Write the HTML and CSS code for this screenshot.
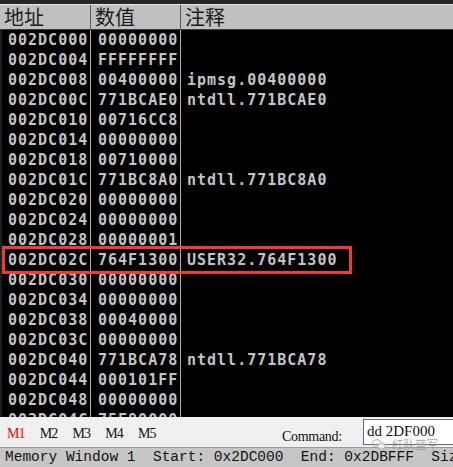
FILE: index.html
```html
<!DOCTYPE html>
<html lang="zh">
<head>
    <meta charset="UTF-8">
    <title>Memory Window</title>
    <link rel="stylesheet" href="styles.css">
</head>
<body>
    <div class="window">
        <div class="top-strip"></div>

        <div class="header">
            <div class="col addr">地址</div>
            <div class="col val">数值</div>
            <div class="col note">注释</div>
        </div>

        <div class="rows">
            <div class="row"><span class="addr">002DC000</span><span class="val">00000000</span><span class="note"></span></div>
            <div class="row"><span class="addr">002DC004</span><span class="val">FFFFFFFF</span><span class="note"></span></div>
            <div class="row"><span class="addr">002DC008</span><span class="val">00400000</span><span class="note">ipmsg.00400000</span></div>
            <div class="row"><span class="addr">002DC00C</span><span class="val">771BCAE0</span><span class="note">ntdll.771BCAE0</span></div>
            <div class="row"><span class="addr">002DC010</span><span class="val">00716CC8</span><span class="note"></span></div>
            <div class="row"><span class="addr">002DC014</span><span class="val">00000000</span><span class="note"></span></div>
            <div class="row"><span class="addr">002DC018</span><span class="val">00710000</span><span class="note"></span></div>
            <div class="row"><span class="addr">002DC01C</span><span class="val">771BC8A0</span><span class="note">ntdll.771BC8A0</span></div>
            <div class="row"><span class="addr">002DC020</span><span class="val">00000000</span><span class="note"></span></div>
            <div class="row"><span class="addr">002DC024</span><span class="val">00000000</span><span class="note"></span></div>
            <div class="row"><span class="addr">002DC028</span><span class="val">00000001</span><span class="note"></span></div>
            <div class="row"><span class="addr">002DC02C</span><span class="val">764F1300</span><span class="note">USER32.764F1300</span></div>
            <div class="row"><span class="addr">002DC030</span><span class="val">00000000</span><span class="note"></span></div>
            <div class="row"><span class="addr">002DC034</span><span class="val">00000000</span><span class="note"></span></div>
            <div class="row"><span class="addr">002DC038</span><span class="val">00040000</span><span class="note"></span></div>
            <div class="row"><span class="addr">002DC03C</span><span class="val">00000000</span><span class="note"></span></div>
            <div class="row"><span class="addr">002DC040</span><span class="val">771BCA78</span><span class="note">ntdll.771BCA78</span></div>
            <div class="row"><span class="addr">002DC044</span><span class="val">000101FF</span><span class="note"></span></div>
            <div class="row"><span class="addr">002DC048</span><span class="val">00000000</span><span class="note"></span></div>
            <div class="row"><span class="addr">002DC04C</span><span class="val">75F80000</span><span class="note"></span></div>
        </div>

        <div class="toolbar">
            <div class="tabs">
                <span class="tab active">M1</span>
                <span class="tab">M2</span>
                <span class="tab">M3</span>
                <span class="tab">M4</span>
                <span class="tab">M5</span>
            </div>
            <span class="cmd-label">Command:</span>
            <div class="cmd-input">dd 2DF000</div>
        </div>

        <div class="status">Memory Window 1  Start: 0x2DC000  End: 0x2DBFFF  Siz</div>

        <!-- 标注框 -->
        <div class="highlight"></div>

        <!-- 水印 -->
        <div class="watermark">
            <svg width="14" height="11" viewBox="0 0 14 11">
                <ellipse cx="5" cy="4.5" rx="4.5" ry="3.8" fill="none" stroke="#a8a8a8" stroke-width="1"/>
                <ellipse cx="9.5" cy="7" rx="3.8" ry="3.2" fill="#f4f4f4" stroke="#a8a8a8" stroke-width="1"/>
            </svg>
            <span>红队蓝军</span>
        </div>
    </div>
</body>
</html>
```

FILE: styles.css
```css
body {
    margin: 0;
    padding: 0;
    background-color: #000;
    overflow: hidden;
}

.window {
    position: relative;
    width: 453px;
    height: 467px;
    display: flex;
    flex-direction: column;
    overflow: hidden;
}

.top-strip {
    height: 4px;
    flex-shrink: 0;
    background-color: #262626;
}

.header {
    display: flex;
    flex-shrink: 0;
    height: 26px;
    box-sizing: border-box;
    background-color: #c0c0c0;
    border-top: 1px solid #e6e6e6;
    border-bottom: 1px solid #3a3a3a;
    font-family: "Noto Sans CJK SC", sans-serif;
    font-size: 20px;
    line-height: 24px;
    color: #1c1c1c;
}

.header .col {
    box-sizing: border-box;
    padding-left: 4px;
    white-space: nowrap;
}

.header .addr {
    width: 91px;
    border-right: 1px solid #5a5a5a;
}

.header .val {
    width: 90px;
    border-right: 1px solid #5a5a5a;
}

.header .note {
    flex: 1;
}

.rows {
    flex: 1;
    overflow: hidden;
    background-color: #000;
    border-left: 2px solid #1e1e1e;
}

.row {
    display: flex;
    height: 20px;
    font-family: "DejaVu Sans Mono", monospace;
    font-weight: bold;
    font-size: 15px;
    letter-spacing: 1px;
    line-height: 20px;
    color: #c4c4c4;
    white-space: nowrap;
}

.row span {
    box-sizing: border-box;
}

.row .addr {
    width: 89px;
    padding-left: 6px;
    border-right: 1px solid #b0b0b0;
}

.row .val {
    width: 90px;
    padding-left: 7px;
    border-right: 1px solid #b0b0b0;
}

.row .note {
    flex: 1;
    padding-left: 6px;
}

.toolbar {
    display: flex;
    flex-shrink: 0;
    height: 30px;
    background-color: #f0f0f0;
    font-family: "Liberation Serif", serif;
    white-space: nowrap;
    overflow: hidden;
}

.tabs {
    display: flex;
    flex-shrink: 0;
    width: 282px;
    box-sizing: border-box;
    padding: 9px 0 0 7px;
    font-size: 14px;
    line-height: 16px;
    color: #111;
}

.tab {
    width: 32.75px;
    flex-shrink: 0;
    letter-spacing: -1px;
}

.tab.active {
    color: #ff0000;
}

.cmd-label {
    flex-shrink: 0;
    width: 60px;
    padding-top: 12px;
    font-size: 14px;
    line-height: 16px;
    color: #111;
    letter-spacing: -0.3px;
}

.cmd-input {
    flex-shrink: 0;
    margin-left: 21px;
    margin-top: 2px;
    width: 100px;
    height: 26px;
    box-sizing: border-box;
    background-color: #fff;
    border: 1px solid #6a6a6a;
    border-right: none;
    padding-left: 3px;
    font-size: 15px;
    line-height: 22px;
    color: #111;
}

.status {
    height: 20px;
    flex-shrink: 0;
    box-sizing: border-box;
    background-color: #c6c6c6;
    border-top: 1px solid #9a9a9a;
    padding-left: 5px;
    font-family: "Liberation Mono", monospace;
    font-size: 14.5px;
    line-height: 19px;
    color: #141414;
    white-space: pre;
    overflow: hidden;
}

/* 红色标注框 */
.highlight {
    position: absolute;
    left: 2px;
    top: 246px;
    width: 350px;
    height: 28px;
    box-sizing: border-box;
    border: 3px solid #f23a3a;
}

.watermark {
    position: absolute;
    left: 372px;
    top: 437px;
    display: flex;
    align-items: center;
    gap: 6px;
    font-family: "Noto Sans CJK SC", sans-serif;
    font-size: 11.5px;
    line-height: 14px;
    color: #9c9c9c;
    opacity: 0.85;
}
```
